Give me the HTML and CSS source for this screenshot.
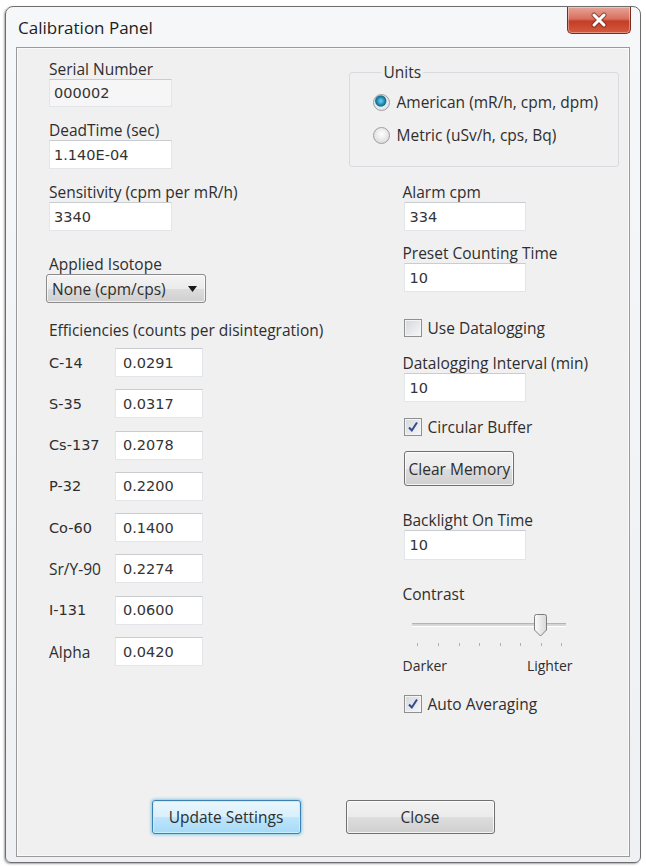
FILE: index.html
```html
<!DOCTYPE html>
<html lang="en">
<head>
    <meta charset="utf-8">
    <title>Calibration Panel</title>
    <link rel="stylesheet" href="styles.css">
</head>
<body>

<div class="window">
    <div class="titlebar">
        <span class="title">Calibration Panel</span>
        <button class="close-x" title="Close">
            <svg width="18" height="16" viewBox="0 0 18 16">
                <path d="M4 3 L14 13 M14 3 L4 13" stroke="#5a1d14" stroke-width="5" stroke-linecap="round" opacity="0.55"/>
                <path d="M4 3 L14 13 M14 3 L4 13" stroke="#fff" stroke-width="3" stroke-linecap="round"/>
            </svg>
        </button>
    </div>

    <div class="client">
        <div class="columns">

            <!-- left side: device constants and isotope efficiencies -->
            <div class="col-left">
                <div class="field serial">
                    <label>Serial Number</label>
                    <input class="box readonly" value="000002" readonly>
                </div>
                <div class="field deadtime">
                    <label>DeadTime (sec)</label>
                    <input class="box tall" value="1.140E-04">
                </div>
                <div class="field sensitivity">
                    <label>Sensitivity (cpm per mR/h)</label>
                    <input class="box tall" value="3340">
                </div>
                <div class="field isotope">
                    <label>Applied Isotope</label>
                    <div class="combo">
                        <span>None (cpm/cps)</span>
                        <svg width="9" height="6" viewBox="0 0 9 6"><path d="M0 0 H9 L4.5 6 Z" fill="#1a1a1a"/></svg>
                    </div>
                </div>

                <div class="eff-title">Efficiencies (counts per disintegration)</div>
                <div class="eff-grid">
                    <span class="iso">C-14</span><input class="box eff" value="0.0291">
                    <span class="iso">S-35</span><input class="box eff" value="0.0317">
                    <span class="iso">Cs-137</span><input class="box eff" value="0.2078">
                    <span class="iso">P-32</span><input class="box eff" value="0.2200">
                    <span class="iso">Co-60</span><input class="box eff" value="0.1400">
                    <span class="iso plain">Sr/Y-90</span><input class="box eff" value="0.2274">
                    <span class="iso">I-131</span><input class="box eff" value="0.0600">
                    <span class="iso plain">Alpha</span><input class="box eff" value="0.0420">
                </div>
            </div>

            <!-- right side: units, alarm, logging and display -->
            <div class="col-right">
                <fieldset class="units">
                    <legend>Units</legend>
                    <div class="radio-row first"><span class="radio on"></span>American (mR/h, cpm, dpm)</div>
                    <div class="radio-row"><span class="radio"></span>Metric (uSv/h, cps, Bq)</div>
                </fieldset>

                <div class="rfield alarm">
                    <label>Alarm cpm</label>
                    <input class="box" value="334">
                </div>
                <div class="rfield preset">
                    <label>Preset Counting Time</label>
                    <input class="box" value="10">
                </div>

                <div class="check-row datalog"><span class="check"></span>Use Datalogging</div>

                <div class="rfield interval">
                    <label>Datalogging Interval (min)</label>
                    <input class="box" value="10">
                </div>

                <div class="check-row circular">
                    <span class="check">
                        <svg width="12" height="12" viewBox="0 0 12 12"><path d="M2 6.5 L4.8 9.5 L10 1.5" fill="none" stroke="#33478f" stroke-width="2"/></svg>
                    </span>Circular Buffer
                </div>

                <button class="btn clear-mem">Clear Memory</button>

                <div class="rfield backlight">
                    <label>Backlight On Time</label>
                    <input class="box" value="10">
                </div>

                <div class="contrast-label">Contrast</div>
                <div class="slider">
                    <div class="track"></div>
                    <svg class="thumb" width="13" height="23" viewBox="0 0 13 23">
                        <defs>
                            <linearGradient id="thumbFill" x1="0" y1="0" x2="1" y2="0">
                                <stop offset="0" stop-color="#fbfbfb"/>
                                <stop offset="1" stop-color="#d8d8d8"/>
                            </linearGradient>
                        </defs>
                        <path d="M2.5 0.5 H10.5 Q12.5 0.5 12.5 2.5 V16 L6.5 22 L0.5 16 V2.5 Q0.5 0.5 2.5 0.5 Z" fill="url(#thumbFill)" stroke="#7d7d7d"/>
                    </svg>
                    <div class="ticks">
                        <i></i><i></i><i></i><i></i><i></i><i></i><i></i><i></i>
                    </div>
                </div>
                <div class="scale-labels"><span>Darker</span><span>Lighter</span></div>

                <div class="check-row averaging">
                    <span class="check">
                        <svg width="12" height="12" viewBox="0 0 12 12"><path d="M2 6.5 L4.8 9.5 L10 1.5" fill="none" stroke="#33478f" stroke-width="2"/></svg>
                    </span>Auto Averaging
                </div>
            </div>
        </div>

        <div class="actions">
            <button class="btn default">Update Settings</button>
            <button class="btn">Close</button>
        </div>
    </div>
</div>

</body>
</html>
```

FILE: styles.css
```css
body {
    margin: 0;
    padding: 0;
    width: 646px;
    height: 867px;
    background-color: #ffffff;
    font-family: "Open Sans", "Noto Sans", sans-serif;
    font-size: 15.5px;
    color: #2e2e2e;
    overflow: hidden;
}

.window {
    margin: 6px 0 0 5px;
    width: 636px;
    height: 857px;
    box-sizing: border-box;
    border: 1px solid #6e6e6e;
    border-radius: 8px 8px 6px 6px;
    background: linear-gradient(#f6f7f9, #eef0f3);
    box-shadow: -1px 1px 2px rgba(0, 0, 0, 0.35);
    display: flex;
    flex-direction: column;
}

.titlebar {
    height: 40px;
    display: flex;
    justify-content: space-between;
    align-items: flex-start;
    flex-shrink: 0;
}

.title {
    margin: 11px 0 0 12px;
    font-size: 17px;
    line-height: 20px;
    color: #1d1d1d;
}

.close-x {
    margin: 0 9px 0 0;
    width: 64px;
    height: 27px;
    padding: 0;
    border: 1px solid #7a2a1f;
    border-top: none;
    border-radius: 0 0 5px 5px;
    background: linear-gradient(#e7a497 0%, #d9715f 45%, #c43e28 55%, #d45a3d 100%);
    box-shadow: inset 0 0 0 1px rgba(255, 255, 255, 0.35);
    display: flex;
    justify-content: center;
    align-items: center;
}

.client {
    margin: 0 10px 5px 10px;
    flex: 1;
    border: 1px solid #9a9a9a;
    background-color: #f0f0f0;
    box-shadow: inset 0 0 0 1px #fafafa;
    display: flex;
    flex-direction: column;
}

.columns {
    display: flex;
    flex: 1;
}

label {
    display: block;
    line-height: 18px;
    margin-bottom: 1px;
    white-space: nowrap;
}

.box {
    display: block;
    box-sizing: border-box;
    height: 29px;
    margin: 0;
    padding: 0 0 0 4px;
    background-color: #ffffff;
    border: 1px solid #e2e6ea;
    border-top-color: #c9ccd1;
    font-family: "DejaVu Sans", sans-serif;
    font-size: 14.5px;
    color: #333;
    outline: none;
}

.box.readonly {
    background-color: #f6f6f6;
    height: 28px;
}

/* left column */

.col-left {
    margin-left: 32px;
    width: 301px;
}

.field .box {
    width: 123px;
}

.field.serial {
    margin-top: 12px;
}

.field.deadtime {
    margin-top: 14px;
}

.field.sensitivity {
    margin-top: 14px;
}

.field.isotope {
    margin-top: 24px;
}

.combo {
    margin-left: -3px;
    width: 160px;
    height: 29px;
    box-sizing: border-box;
    padding: 0 8px 0 5px;
    border: 1px solid #8a8a8a;
    border-radius: 3px;
    background: linear-gradient(#f4f4f4 0%, #ebebeb 50%, #dddddd 51%, #cfcfcf 100%);
    box-shadow: inset 0 0 0 1px rgba(255, 255, 255, 0.7);
    display: flex;
    justify-content: space-between;
    align-items: center;
}

.eff-title {
    margin-top: 18px;
    line-height: 18px;
    white-space: nowrap;
}

.eff-grid {
    margin-top: 9px;
    display: grid;
    grid-template-columns: 66px 88px;
    grid-auto-rows: 29px;
    row-gap: 12.3px;
    align-items: center;
}

.iso {
    font-family: "DejaVu Sans", sans-serif;
    font-size: 14.5px;
}

.iso.plain {
    font-family: "Open Sans", sans-serif;
    font-size: 15.5px;
}

.box.eff {
    width: 88px;
    padding-left: 7px;
}

/* right column */

.col-right {
    width: 280px;
    display: flex;
    flex-direction: column;
    align-items: flex-start;
}

.units {
    margin: 15px 0 0 0;
    width: 270px;
    box-sizing: border-box;
    padding: 0 0 21px 23px;
    border: 1px solid #d7dbe0;
    border-radius: 3px;
    min-inline-size: 0;
}

.units legend {
    margin-left: 8px;
    padding: 0 2px;
    line-height: 18px;
}

.radio-row {
    display: flex;
    align-items: center;
    gap: 6px;
    line-height: 20px;
    margin-top: 13px;
    white-space: nowrap;
}

.radio-row.first {
    margin-top: 11px;
}

.radio {
    flex-shrink: 0;
    width: 15px;
    height: 15px;
    border: 1px solid #9a9fa5;
    border-radius: 50%;
    background: radial-gradient(circle at 50% 40%, #ffffff 0%, #e4e4e4 60%, #cfd2d6 100%);
}

.radio.on {
    background: radial-gradient(circle at 45% 40%, #7fd0ea 0%, #2a9cc4 25%, #136a8c 42%, #e9ecef 50%, #d8dbdf 100%);
}

.rfield {
    margin-left: 53px;
}

.rfield .box {
    margin-left: 2px;
    width: 122px;
}

.rfield.alarm {
    margin-top: 16px;
}

.rfield.preset {
    margin-top: 13px;
}

.rfield.interval {
    margin-top: 16px;
}

.rfield.backlight {
    margin-top: 25px;
}

.rfield.backlight .box {
    height: 30px;
}

.check-row {
    margin-left: 55px;
    display: flex;
    align-items: center;
    gap: 5px;
    line-height: 20px;
    white-space: nowrap;
}

.check-row.datalog {
    margin-top: 26px;
}

.check-row.circular {
    margin-top: 15px;
}

.check-row.averaging {
    margin-top: 19px;
}

.check {
    width: 16px;
    height: 16px;
    border: 1px solid #8e8f8f;
    background: linear-gradient(135deg, #d4d7dc, #f6f7f8);
    box-shadow: inset 0 0 0 1px #f4f4f4;
    display: flex;
    justify-content: center;
    align-items: center;
}

.btn {
    box-sizing: border-box;
    padding: 0;
    border: 1px solid #707070;
    border-radius: 3px;
    background: linear-gradient(#f2f2f2 0%, #ebebeb 50%, #dddddd 51%, #cfcfcf 100%);
    box-shadow: inset 0 0 0 1px rgba(255, 255, 255, 0.75);
    font-family: "Open Sans", sans-serif;
    font-size: 15.5px;
    color: #2e2e2e;
}

.btn.clear-mem {
    margin: 14px 0 0 55px;
    width: 110px;
    height: 35px;
    white-space: nowrap;
}

.contrast-label {
    margin: 25px 0 0 53px;
    line-height: 18px;
}

.slider {
    position: relative;
    margin: 8px 0 0 60px;
    width: 160px;
    height: 38px;
}

.track {
    position: absolute;
    left: 3px;
    right: 3px;
    top: 12px;
    height: 2px;
    background-color: #d6d6d6;
    border-top: 1px solid #b4b4b4;
    border-bottom: 1px solid #ffffff;
}

.thumb {
    position: absolute;
    left: 125px;
    top: 3px;
}

.ticks {
    position: absolute;
    left: 8px;
    right: 7px;
    top: 32px;
    display: flex;
    justify-content: space-between;
}

.ticks i {
    width: 1px;
    height: 3px;
    background-color: #b0b0b0;
}

.scale-labels {
    margin: 8px 0 0 53px;
    width: 170px;
    display: flex;
    justify-content: space-between;
    line-height: 18px;
    font-size: 14px;
}

/* dialog buttons */

.actions {
    display: flex;
    justify-content: center;
    gap: 45px;
    margin-bottom: 22px;
}

.actions .btn {
    width: 149px;
    height: 34px;
}

.btn.default {
    border-color: #3c7fb1;
    background: linear-gradient(#eaf6fd 0%, #d9f0fc 50%, #bee6fd 51%, #a7d9f5 100%);
    box-shadow: inset 0 0 0 1px #c9eefc, 0 0 3px 1px rgba(90, 190, 230, 0.7);
}
```
